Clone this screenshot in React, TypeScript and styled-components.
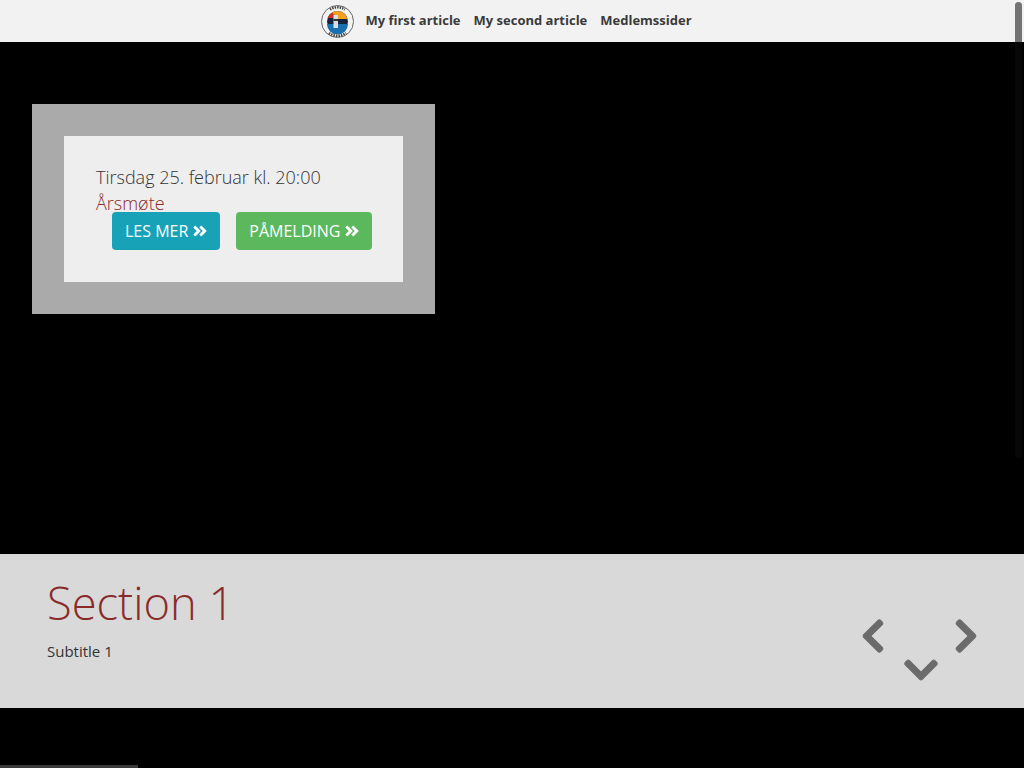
import styled, { createGlobalStyle } from 'styled-components';
import { FaAngleDoubleRight, FaChevronDown, FaChevronLeft, FaChevronRight } from 'react-icons/fa';

const GlobalStyle = createGlobalStyle`
  html, body {
    margin: 0;
    padding: 0;
    height: 100%;
    overflow: hidden;
    background: #000;
    font-family: 'Open Sans', sans-serif;
  }
`;

const Page = styled.div`
  height: 768px;
  overflow: hidden;
  position: relative;
  background: #000;
`;

const NavBar = styled.nav`
  height: 42px;
  background: #f2f2f2;
  display: flex;
  align-items: center;
  justify-content: center;
  padding-right: 11px;
  svg {
    margin-right: -2px;
  }
`;

const NavLink = styled.a`
  margin: 0 0 2px 13px;
  font-size: 13px;
  font-weight: 700;
  color: #3a3a3a;
  text-decoration: none;
`;

const Hero = styled.section`
  height: 512px;
  padding: 62px 0 0 32px;
  box-sizing: border-box;
`;

const Frame = styled.div`
  width: 403px;
  height: 210px;
  box-sizing: border-box;
  padding: 32px;
  background: #aaa;
`;

const Card = styled.div`
  height: 146px;
  box-sizing: border-box;
  padding: 28px 32px;
  background: #eee;
  font-size: 18px;
  font-weight: 300;
  line-height: 26px;
`;

const When = styled.div`
  color: #333;
`;

const What = styled.div`
  color: #8a2b2b;
  height: 22px;
`;

const Actions = styled.div`
  display: flex;
  gap: 16px;
  margin-left: 16px;
`;

const ActionButton = styled.a<{ $color: string }>`
  display: flex;
  flex: none;
  align-items: center;
  gap: 5px;
  height: 38px;
  padding: 0 13px;
  border-radius: 4px;
  background: ${(p) => p.$color};
  color: #fff;
  font-size: 16px;
  font-weight: 400;
  white-space: nowrap;
  text-decoration: none;
  svg {
    width: 14px;
    height: 16px;
    stroke-width: 16;
  }
`;

const Band = styled.section`
  height: 154px;
  background: #d9d9d9;
  display: flex;
  justify-content: space-between;
  padding: 16px 49px 0 47px;
  box-sizing: border-box;
`;

const Title = styled.h1`
  margin: 0;
  padding-top: 1px;
  font-size: 45.3px;
  font-weight: 300;
  line-height: 64px;
  color: #8a2b2b;
`;

const Subtitle = styled.p`
  margin: 4px 0 0;
  font-size: 15px;
  line-height: 24px;
  color: #333;
`;

const Arrows = styled.div`
  display: grid;
  grid-template-columns: 24px 72px 18px;
  grid-template-rows: 35px 34px;
  margin-top: 48px;
  color: #6b6b6b;
`;

const Arrow = styled.span<{ $col: number; $row: number }>`
  grid-column: ${(p) => p.$col};
  grid-row: ${(p) => p.$row};
  display: flex;
  align-items: center;
  justify-content: center;
  svg {
    width: 38px;
    height: 38px;
    flex: none;
    stroke-width: 14;
  }
`;

const BottomBar = styled.div`
  position: absolute;
  left: 0;
  bottom: 0;
  width: 138px;
  height: 3px;
  background: #3a3a3a;
`;

const ScrollThumb = styled.div`
  position: absolute;
  top: 2px;
  right: 2px;
  width: 7px;
  height: 456px;
  border-radius: 4px;
  background: rgba(128, 128, 128, 0.05);
  &::before {
    content: '';
    display: block;
    height: 40px;
    border-radius: 4px 4px 0 0;
    background: #737373;
  }
`;

// club badge, a ringed disc with a lighthouse against the sunset
const Logo = () => (
  <svg width="33" height="33" viewBox="0 0 33 33">
    <circle cx="16.5" cy="16.5" r="16" fill="#f4f4f4" stroke="#666" strokeWidth="1" />
    <circle cx="16.5" cy="16.5" r="10.5" fill="#16233f" />
    <path d="M9 9a10.5 10.5 0 0 1 17.5 5H13z" fill="#f2a01d" />
    <path d="M6.5 13a10.5 10.5 0 0 1 5-5.5L15 13z" fill="#c9332b" />
    <path d="M6 19h21a10.5 10.5 0 0 1-21 0z" fill="#1a6fae" />
    <rect x="12.5" y="10" width="4.5" height="13" fill="#d9dfe6" />
    <rect x="12.5" y="14" width="4.5" height="2" fill="#333" />
    <path d="M9 4.5a14 14 0 0 1 15 0M8 28a14 14 0 0 0 17 0" fill="none" stroke="#444" strokeWidth="2.5" strokeDasharray="1.5 1" />
  </svg>
);

export default function App() {
  return (
    <Page>
      <GlobalStyle />
      <NavBar>
        <Logo />
        <NavLink href="#">My first article</NavLink>
        <NavLink href="#">My second article</NavLink>
        <NavLink href="#">Medlemssider</NavLink>
      </NavBar>
      <Hero>
        <Frame>
          <Card>
            <When>Tirsdag 25. februar kl. 20:00</When>
            <What>Årsmøte</What>
            <Actions>
              <ActionButton $color="#17a2b8">
                LES MER <FaAngleDoubleRight />
              </ActionButton>
              <ActionButton $color="#5cb85c">
                PÅMELDING <FaAngleDoubleRight />
              </ActionButton>
            </Actions>
          </Card>
        </Frame>
      </Hero>
      <Band>
        <div>
          <Title>Section 1</Title>
          <Subtitle>Subtitle 1</Subtitle>
        </div>
        <Arrows>
          <Arrow $col={1} $row={1}>
            <FaChevronLeft />
          </Arrow>
          <Arrow $col={3} $row={1}>
            <FaChevronRight />
          </Arrow>
          <Arrow $col={2} $row={2}>
            <FaChevronDown />
          </Arrow>
        </Arrows>
      </Band>
      <BottomBar />
      <ScrollThumb />
    </Page>
  );
}
